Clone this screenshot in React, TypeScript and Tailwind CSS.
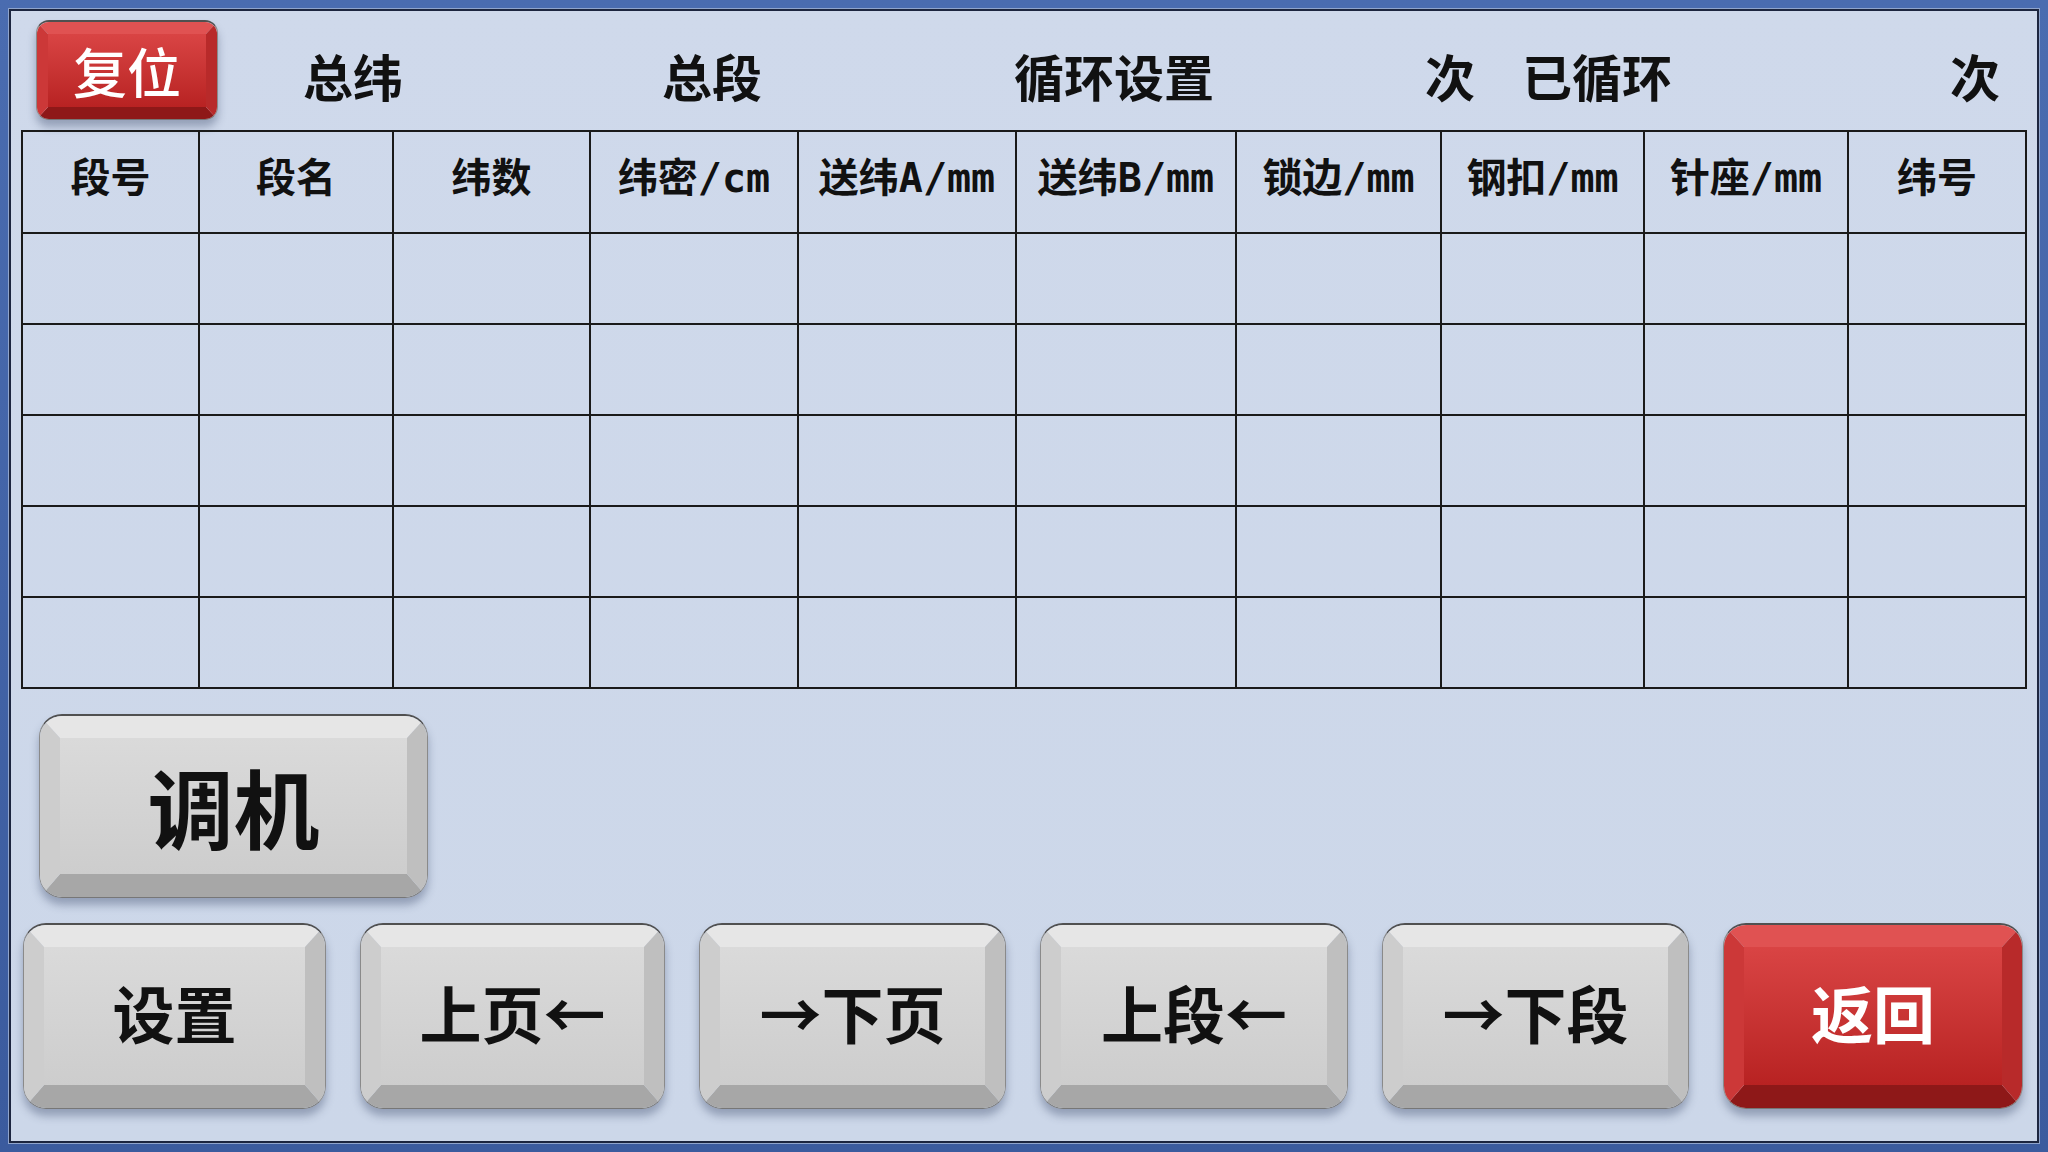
import React from 'react';

const CJK = { fontFamily: '"Noto Sans CJK SC", "Noto Sans", sans-serif' };
const HEAD = { fontFamily: '"DejaVu Sans Mono", "Noto Sans CJK SC", monospace' };

const columns = [
  { label: '段号', w: 177 },
  { label: '段名', w: 194 },
  { label: '纬数', w: 197 },
  { label: '纬密/cm', w: 208 },
  { label: '送纬A/mm', w: 218 },
  { label: '送纬B/mm', w: 220 },
  { label: '锁边/mm', w: 205 },
  { label: '钢扣/mm', w: 203 },
  { label: '针座/mm', w: 204 },
  { label: '纬号', w: 178 },
];

type KeyProps = {
  red?: boolean;
  small?: boolean;
  className?: string;
  textClass?: string;
  children: React.ReactNode;
};

// keyboard-key style button: bevels drawn with coloured borders
function Key({ red, small, className = '', textClass = '', children }: KeyProps) {
  const bevel = small
    ? 'border-t-[12px] border-x-[11px] border-b-[12px] rounded-[12px]'
    : 'border-t-[22px] border-x-[20px] border-b-[23px] rounded-[22px]';
  const colours = red
    ? 'border-t-[#e05252] border-l-[#cc3838] border-r-[#b82a2a] border-b-[#8e1818] bg-gradient-to-b from-[#d94444] to-[#b82222] text-white'
    : 'border-t-[#e6e6e6] border-l-[#cdcdcd] border-r-[#bfbfbf] border-b-[#a7a7a7] bg-gradient-to-b from-[#dadada] to-[#cdcdcd] text-[#111]';
  return (
    <div
      className={`shrink-0 ${small ? 'rounded-[13px]' : 'rounded-[23px]'} border-t-2 border-t-[#505050] border-x border-x-[#8a8a8a] border-b border-b-[#777] shadow-[0_7px_8px_rgba(40,55,90,0.35)] ${className}`}
    >
      <div className={`h-full w-full flex items-center justify-center ${bevel} ${colours}`}>
        <span className={`leading-none ${textClass}`} style={CJK}>
          {children}
        </span>
      </div>
    </div>
  );
}

export default function App() {
  return (
    <div className="w-[2048px] h-[1152px] bg-gradient-to-b from-[#4a6cb0] to-[#3b5b9e] p-[9px] overflow-hidden">
      <div className="h-full w-full border-2 border-[#1c253f] shadow-[0_0_0_1px_#8fa4cc] bg-gradient-to-b from-[#cfd9eb] to-[#ccd7e9] flex flex-col px-[10px]">
        {/* top bar */}
        <div className="flex items-center h-[100px] mt-[9px]" style={CJK}>
          <Key red small className="ml-[15px] w-[182px] h-[100px]" textClass="text-[54px] font-medium">
            复位
          </Key>
          <div className="flex items-center mt-[10px] text-[50px] font-bold text-[#111] leading-none">
            <span className="ml-[85px]">总纬</span>
            <span className="ml-[259px]">总段</span>
            <span className="ml-[252px]">循环设置</span>
            <span className="ml-[211px]">次</span>
            <span className="ml-[47px]">已循环</span>
            <span className="ml-[278px]">次</span>
          </div>
        </div>

        {/* segment table */}
        <table className="mt-[10px] border-collapse table-fixed w-[2004px] border-2 border-[#1a1a1a]">
          <colgroup>
            {columns.map((c) => (
              <col key={c.label} style={{ width: c.w }} />
            ))}
          </colgroup>
          <thead>
            <tr className="h-[102px]">
              {columns.map((c) => (
                <th
                  key={c.label}
                  className="border-2 border-[#1a1a1a] text-[40px] font-bold text-[#111] text-center align-middle pb-[8px] whitespace-nowrap"
                  style={HEAD}
                >
                  {c.label}
                </th>
              ))}
            </tr>
          </thead>
          <tbody>
            {[0, 1, 2, 3, 4].map((r) => (
              <tr key={r} className="h-[91px]">
                {columns.map((c) => (
                  <td key={c.label} className="border-2 border-[#1a1a1a]" />
                ))}
              </tr>
            ))}
          </tbody>
        </table>

        <Key className="mt-[25px] ml-[18px] w-[389px] h-[184px]" textClass="text-[86px] font-bold">
          调机
        </Key>

        {/* bottom buttons */}
        <div className="flex gap-[34px] mt-[25px] ml-[2px]">
          <Key className="w-[303px] h-[186px]" textClass="text-[62px] font-semibold pb-[8px]">设置</Key>
          <Key className="w-[305px] h-[186px]" textClass="text-[62px] font-semibold pb-[8px]">上页←</Key>
          <Key className="w-[307px] h-[186px]" textClass="text-[62px] font-semibold pb-[8px]">→下页</Key>
          <Key className="w-[308px] h-[186px]" textClass="text-[62px] font-semibold pb-[8px]">上段←</Key>
          <Key className="w-[307px] h-[186px]" textClass="text-[62px] font-semibold pb-[8px]">→下段</Key>
          <Key red className="w-[300px] h-[186px]" textClass="text-[62px] font-semibold pb-[8px]">返回</Key>
        </div>
      </div>
    </div>
  );
}
